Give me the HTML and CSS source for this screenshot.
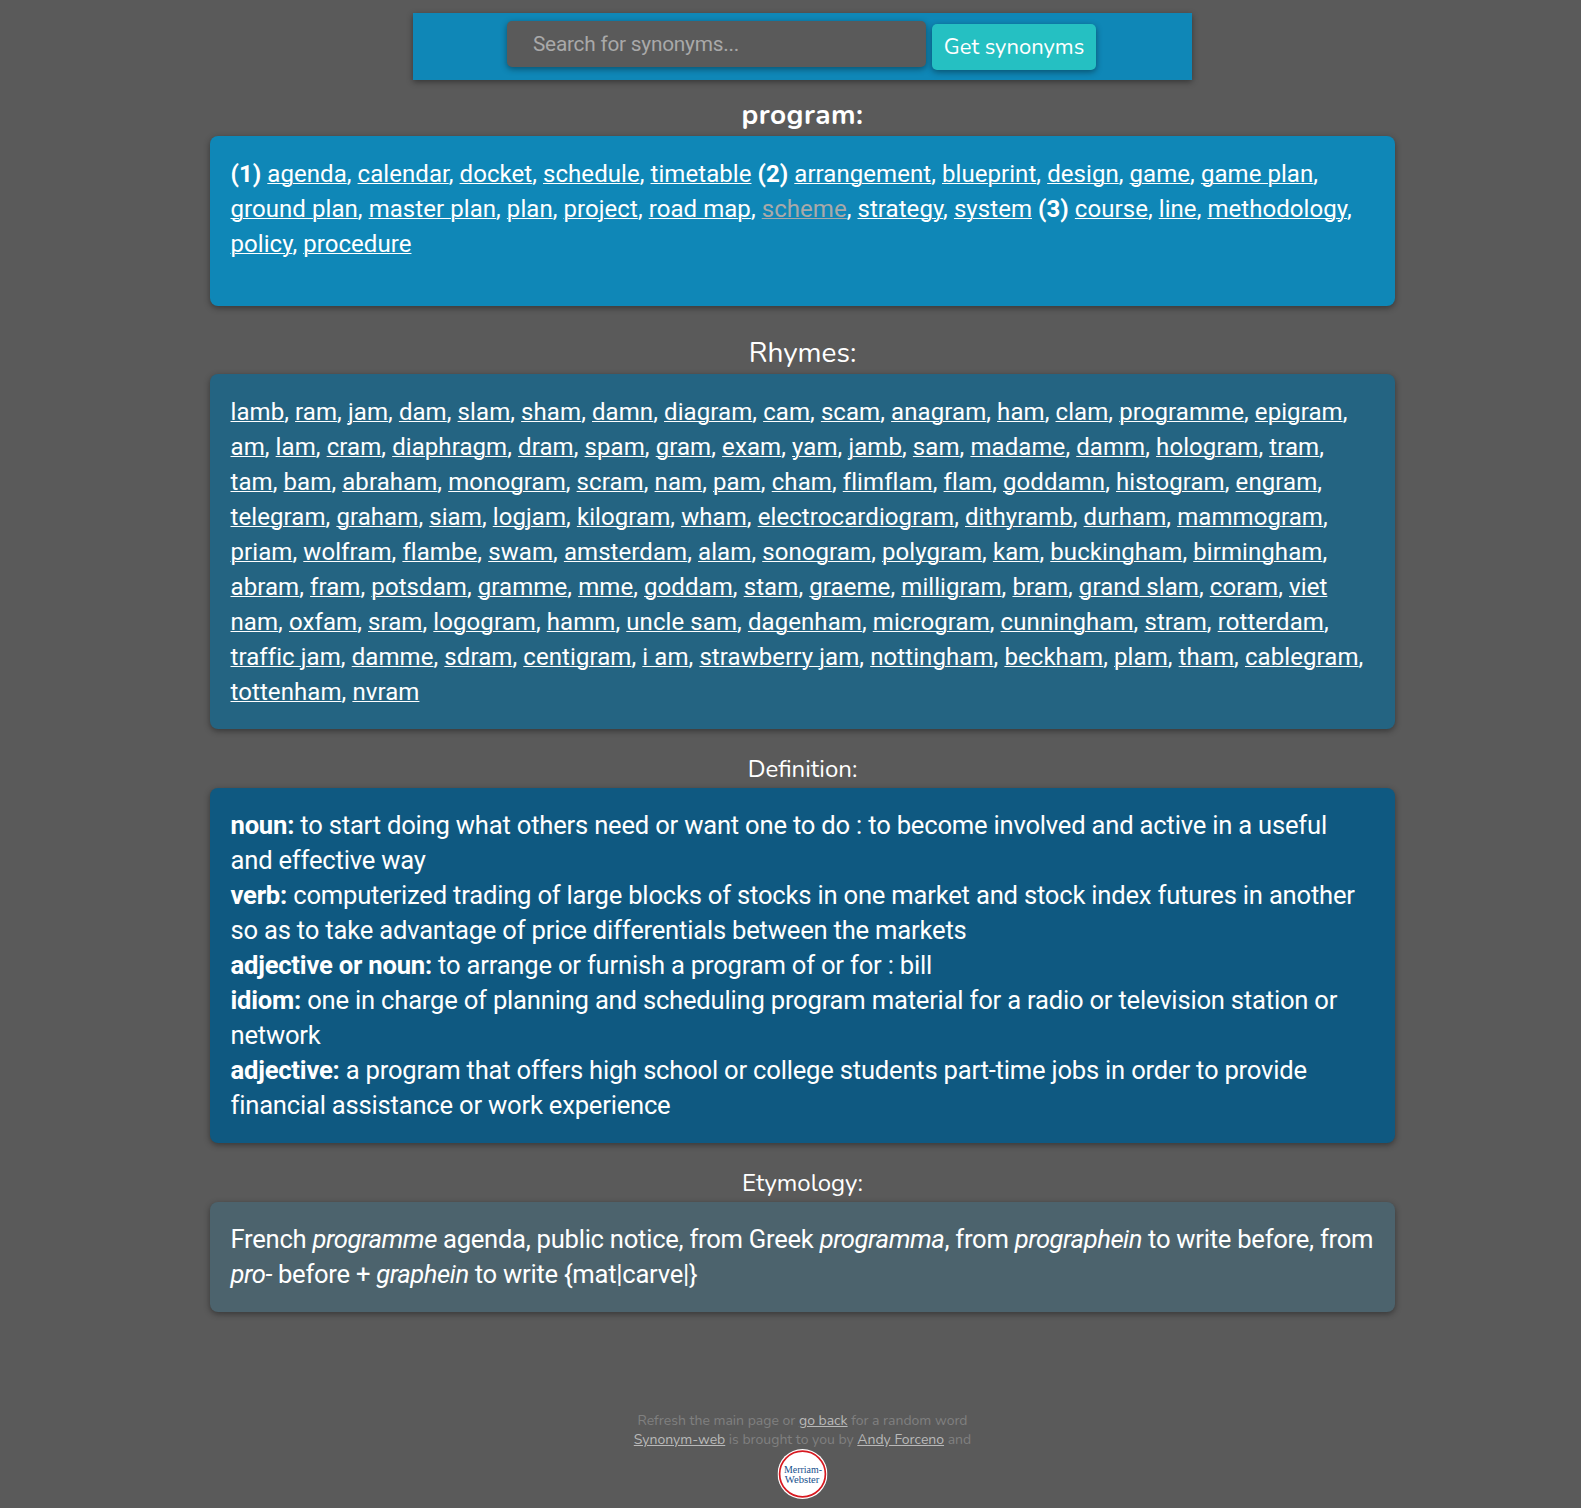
FILE: index.html
```html
<!DOCTYPE html>
<html lang="en">
<head>
<meta charset="utf-8">
<title>Synonym-web</title>
<link rel="stylesheet" href="styles.css">
</head>
<body>
<form class="search">
<input class="search-input" type="text" placeholder="Search for synonyms..." aria-label="Search for synonyms">
<button class="search-button" type="button">Get synonyms</button>
</form>
<main>
<h1 class="title word">program:</h1>
<section class="card synonyms"><b>(1)</b> <a>agenda</a>, <a>calendar</a>, <a>docket</a>, <a>schedule</a>, <a>timetable</a> <b>(2)</b> <a>arrangement</a>, <a>blueprint</a>, <a>design</a>, <a>game</a>, <a>game plan</a>,<br><a>ground plan</a>, <a>master plan</a>, <a>plan</a>, <a>project</a>, <a>road map</a>, <a class="active">scheme</a>, <a>strategy</a>, <a>system</a> <b>(3)</b> <a>course</a>, <a>line</a>, <a>methodology</a>,<br><a>policy</a>, <a>procedure</a></section>
<h2 class="title rhymes-title">Rhymes:</h2>
<section class="card rhymes"><a>lamb</a>, <a>ram</a>, <a>jam</a>, <a>dam</a>, <a>slam</a>, <a>sham</a>, <a>damn</a>, <a>diagram</a>, <a>cam</a>, <a>scam</a>, <a>anagram</a>, <a>ham</a>, <a>clam</a>, <a>programme</a>, <a>epigram</a>,<br><a>am</a>, <a>lam</a>, <a>cram</a>, <a>diaphragm</a>, <a>dram</a>, <a>spam</a>, <a>gram</a>, <a>exam</a>, <a>yam</a>, <a>jamb</a>, <a>sam</a>, <a>madame</a>, <a>damm</a>, <a>hologram</a>, <a>tram</a>,<br><a>tam</a>, <a>bam</a>, <a>abraham</a>, <a>monogram</a>, <a>scram</a>, <a>nam</a>, <a>pam</a>, <a>cham</a>, <a>flimflam</a>, <a>flam</a>, <a>goddamn</a>, <a>histogram</a>, <a>engram</a>,<br><a>telegram</a>, <a>graham</a>, <a>siam</a>, <a>logjam</a>, <a>kilogram</a>, <a>wham</a>, <a>electrocardiogram</a>, <a>dithyramb</a>, <a>durham</a>, <a>mammogram</a>,<br><a>priam</a>, <a>wolfram</a>, <a>flambe</a>, <a>swam</a>, <a>amsterdam</a>, <a>alam</a>, <a>sonogram</a>, <a>polygram</a>, <a>kam</a>, <a>buckingham</a>, <a>birmingham</a>,<br><a>abram</a>, <a>fram</a>, <a>potsdam</a>, <a>gramme</a>, <a>mme</a>, <a>goddam</a>, <a>stam</a>, <a>graeme</a>, <a>milligram</a>, <a>bram</a>, <a>grand slam</a>, <a>coram</a>, <a>viet<br>nam</a>, <a>oxfam</a>, <a>sram</a>, <a>logogram</a>, <a>hamm</a>, <a>uncle sam</a>, <a>dagenham</a>, <a>microgram</a>, <a>cunningham</a>, <a>stram</a>, <a>rotterdam</a>,<br><a>traffic jam</a>, <a>damme</a>, <a>sdram</a>, <a>centigram</a>, <a>i am</a>, <a>strawberry jam</a>, <a>nottingham</a>, <a>beckham</a>, <a>plam</a>, <a>tham</a>, <a>cablegram</a>,<br><a>tottenham</a>, <a>nvram</a></section>
<h3 class="title small-title">Definition:</h3>
<section class="card definition"><b>noun:</b> to start doing what others need or want one to do : to become involved and active in a useful<br>and effective way<br><b>verb:</b> computerized trading of large blocks of stocks in one market and stock index futures in another<br>so as to take advantage of price differentials between the markets<br><b>adjective or noun:</b> to arrange or furnish a program of or for : bill<br><b>idiom:</b> one in charge of planning and scheduling program material for a radio or television station or<br>network<br><b>adjective:</b> a program that offers high school or college students part-time jobs in order to provide<br>financial assistance or work experience</section>
<h3 class="title small-title">Etymology:</h3>
<section class="card etymology">French <i>programme</i> agenda, public notice, from Greek <i>programma</i>, from <i>prographein</i> to write before, from<br><i>pro-</i> before + <i>graphein</i> to write {mat|carve|}</section>
</main>
<footer class="footer">
<div>Refresh the main page or <a>go back</a> for a random word</div>
<div><a>Synonym-web</a> is brought to you by <a>Andy Forceno</a> and</div>
<svg class="logo" width="50" height="50" viewBox="0 0 50 50" role="img" aria-label="Merriam-Webster">
<circle cx="25" cy="25" r="25" fill="#fff"/>
<circle cx="25" cy="25" r="22.9" fill="#fff" stroke="#d71920" stroke-width="1.7"/>
<text x="25.5" y="24.3" textLength="38" lengthAdjust="spacingAndGlyphs">Merriam-</text>
<text x="24.6" y="34.3" textLength="34.5" lengthAdjust="spacingAndGlyphs">Webster</text>
</svg>
</footer>
</body>
</html>
```
FILE: styles.css
```css
* { box-sizing: border-box; }
body {
  margin: 0;
  padding: 13px 0 0 24px;
  background: #5a5a5a;
  color: #fff;
  font-family: Roboto, sans-serif;
}
.search {
  display: flex;
  align-items: flex-start;
  gap: 6px;
  width: 779px;
  height: 67px;
  margin: 0 auto;
  padding: 8px 0 0 94px;
  background: #0f87b7;
  box-shadow: 0 2px 6px rgba(0, 0, 0, .4);
}
.search-input {
  width: 419px;
  height: 46px;
  padding: 0 26px 1px;
  border: 0;
  border-radius: 5px;
  background: #5a5a5a;
  color: #fff;
  font: 20.8px Roboto, sans-serif;
  letter-spacing: -.23px;
  box-shadow: 0 2px 6px rgba(0, 0, 0, .4);
}
.search-input::placeholder { color: #a9a9a9; }
.search-button {
  width: 164px;
  height: 46px;
  margin-top: 3px;
  padding: 0;
  border: 0;
  border-radius: 5px;
  background: #25c0c2;
  color: #fff;
  font: 22px Nunito, Lato, sans-serif;
  white-space: nowrap;
  box-shadow: 0 2px 6px rgba(0, 0, 0, .4);
}
.title {
  margin: 0;
  text-align: center;
  font-family: Nunito, Lato, sans-serif;
  font-weight: 400;
}
.word { height: 56px; padding-top: 17px; font-size: 28px; line-height: 36px; font-weight: 700; letter-spacing: .45px; }
.rhymes-title { height: 68px; padding-top: 29px; font-size: 28px; line-height: 36px; }
.small-title { height: 59px; padding-top: 24px; font-size: 24px; line-height: 32px; }
.card {
  width: 1185px;
  margin: 0 auto;
  padding: 20px 0 20px 20.5px;
  border-radius: 8px;
  font-size: 24px;
  line-height: 35px;
  white-space: nowrap;
  box-shadow: 0 2px 6px rgba(0, 0, 0, .4);
}
.card a { text-decoration: underline 1px; }
.card .active { color: #a9a9a9; }
.synonyms, .rhymes { padding-top: 21px; padding-bottom: 19px; }
.synonyms { height: 170px; background: #0f87b7; letter-spacing: .06px; }
.rhymes { background: #246482; letter-spacing: .08px; }
.definition { background: #0f5981; font-size: 25.6px; letter-spacing: -.21px; }
.etymology { background: #4c636d; font-size: 25.6px; letter-spacing: -.26px; }
.etymology i { letter-spacing: -.44px; }
.footer {
  margin-top: 99px;
  text-align: center;
  color: #808080;
  font: 14px/19px Nunito, Lato, sans-serif;
}
.footer a { color: #b9b9b9; text-decoration: underline; }
.logo { display: block; margin: 0 auto; transform: translateX(-.5px); }
.logo text {
  fill: #164f8c;
  font: 10.5px "Liberation Serif", serif;
  text-anchor: middle;
}
```
